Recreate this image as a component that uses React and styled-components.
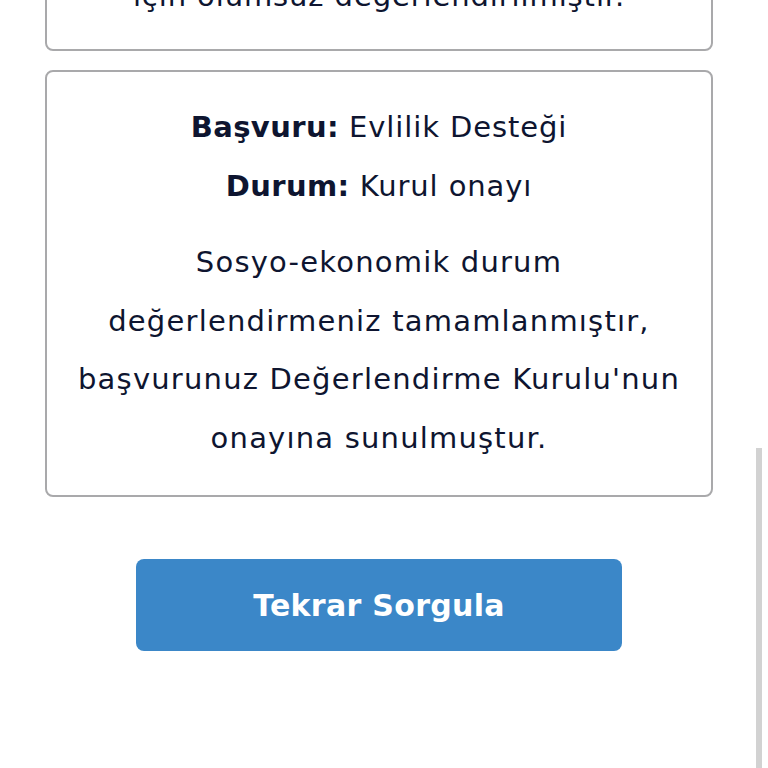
import styled, { createGlobalStyle } from "styled-components";

const GlobalStyle = createGlobalStyle`
    * {
        box-sizing: border-box;
    }
    html, body {
        margin: 0;
        padding: 0;
        background-color: #FFFFFF;
        overflow: hidden;
    }
    body {
        font-family: 'DejaVu Sans', 'Noto Sans', sans-serif;
        color: #0E1530;
    }
`

export default function App() {
    return (
        <>
            <GlobalStyle />
            <Page>
                <Card top>
                    <Line>için olumsuz değerlendirilmiştir.</Line>
                </Card>
                <Card>
                    <Line><b>Başvuru:</b> Evlilik Desteği</Line>
                    <Line><b>Durum:</b> Kurul onayı</Line>
                    <Message>
                        Sosyo-ekonomik durum<br />
                        değerlendirmeniz tamamlanmıştır,<br />
                        başvurunuz Değerlendirme Kurulu'nun<br />
                        onayına sunulmuştur.
                    </Message>
                </Card>
                <Button>Tekrar Sorgula</Button>
            </Page>
            <ScrollThumb />
        </>
    )
}

const Page = styled.main`
    display: flex;
    flex-direction: column;
    align-items: center;
    gap: 19px;
    width: 758px;
    padding: 0 45px;
    margin-top: -75px;
`

const Card = styled.section`
    width: 100%;
    border: 2px solid #A9A9AB;
    border-radius: 8px;
    padding: ${(props) => props.top ? "40px 16px 23px" : "26px 16px 28px"};
    text-align: center;
`

const Line = styled.p`
    margin: 0;
    font-size: 29px;
    letter-spacing: 0.9px;
    line-height: 59px;
    b {
        font-weight: 700;
        letter-spacing: 0.4px;
    }
`

const Message = styled.p`
    margin: 17px 0 0;
    font-size: 29px;
    letter-spacing: 1.2px;
    line-height: 58.5px;
`

const Button = styled.button`
    margin-top: 43px;
    width: 486px;
    height: 92px;
    border: none;
    border-radius: 8px;
    background-color: #3B87C8;
    color: #FFFFFF;
    font-family: 'DejaVu Sans', 'Noto Sans', sans-serif;
    font-size: 30px;
    font-weight: 700;
    letter-spacing: 0.3px;
    cursor: pointer;
`

const ScrollThumb = styled.div`
    position: fixed;
    right: 6px;
    top: 448px;
    bottom: 0;
    width: 6px;
    background-color: #D2D2D2;
`
